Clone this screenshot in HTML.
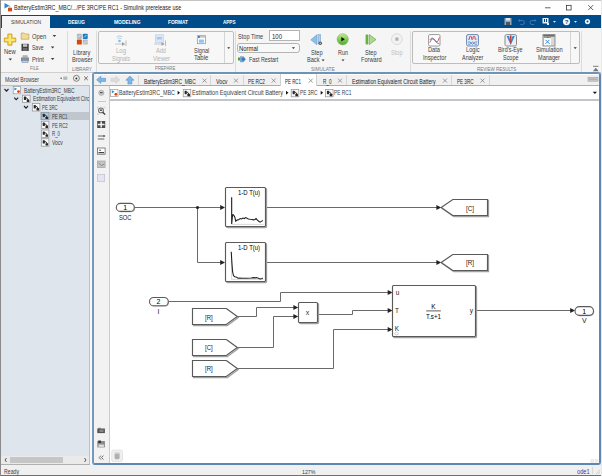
<!DOCTYPE html>
<html><head><meta charset="utf-8">
<style>
html,body{margin:0;padding:0;width:602px;height:476px;overflow:hidden;background:#f0f0f0;}
body{position:relative;font-family:"Liberation Sans",sans-serif;}
.b{position:absolute;box-sizing:border-box;}
.t{position:absolute;white-space:nowrap;line-height:10px;height:10px;transform-origin:0 50%;}
svg{position:absolute;left:0;top:0;}
</style></head><body>
<!-- window borders / title -->
<div class="b" style="left:0;top:0;width:602px;height:15px;background:#fff;"></div>
<div class="b" style="left:0;top:0;width:602px;height:1px;background:#c4c4c4;"></div>
<!-- blue band -->
<div class="b" style="left:0;top:15px;width:602px;height:13px;background:#004b8a;"></div>
<!-- simulation tab -->
<div class="b" style="left:2px;top:16px;width:48px;height:12px;background:#f5f5f5;"></div>
<!-- toolbar -->
<div class="b" style="left:0;top:28px;width:602px;height:44px;background:#f5f5f5;"></div>
<div class="b" style="left:0;top:72px;width:602px;height:1px;background:#cfcfcf;"></div>
<!-- ribbon separators -->
<div class="b" style="left:67px;top:31px;width:1px;height:41px;background:#dcdcdc;"></div>
<div class="b" style="left:96px;top:31px;width:1px;height:41px;background:#dcdcdc;"></div>
<div class="b" style="left:235px;top:31px;width:1px;height:41px;background:#dcdcdc;"></div>
<div class="b" style="left:410px;top:31px;width:1px;height:41px;background:#dcdcdc;"></div>
<div class="b" style="left:581px;top:31px;width:1px;height:41px;background:#dcdcdc;"></div>
<!-- PREPARE gallery box -->
<div class="b" style="left:98px;top:31px;width:136px;height:33px;border:1px solid #bdbdbd;border-radius:2px;background:#f7f7f7;"></div>
<div class="b" style="left:224px;top:32px;width:1px;height:31px;background:#d4d4d4;"></div>
<!-- REVIEW box -->
<div class="b" style="left:412px;top:31px;width:168px;height:33px;border:1px solid #bdbdbd;border-radius:2px;background:#f7f7f7;"></div>
<div class="b" style="left:570px;top:32px;width:1px;height:31px;background:#d4d4d4;"></div>
<!-- stop time input -->
<div class="b" style="left:269px;top:30px;width:31px;height:11px;border:1px solid #b4b4b4;background:#fff;"></div>
<!-- mode dropdown -->
<div class="b" style="left:237px;top:43px;width:63px;height:10px;border:1px solid #b4b4b4;border-radius:3px;background:#f8f8f8;"></div>

<!-- model browser -->
<div class="b" style="left:1px;top:73px;width:91px;height:12px;background:#f0f0f0;"></div>
<div class="b" style="left:1px;top:85px;width:89px;height:1px;background:#b9c1ca;"></div>
<div class="b" style="left:1px;top:86px;width:89px;height:370px;background:#dee5ed;"></div>
<div class="b" style="left:89px;top:85px;width:1px;height:380px;background:#b9c1ca;"></div>
<div class="b" style="left:40px;top:112px;width:49px;height:8px;background:#c0c6ce;"></div>
<div class="b" style="left:1px;top:456px;width:88px;height:8px;background:#eaeaea;"></div>
<div class="b" style="left:10px;top:457px;width:53px;height:6px;background:#c6c6c6;"></div>
<div class="b" style="left:1px;top:464px;width:89px;height:1px;background:#b0b0b0;"></div>

<div class="b" style="left:90px;top:73px;width:2px;height:392px;background:#faf8f6;"></div>
<!-- canvas frame -->
<div class="b" style="left:92px;top:72px;width:509px;height:393px;border:2px solid #5a87b4;border-left-color:#7399c0;border-top-color:#6d93bb;border-radius:3px;background:#fff;"></div>
<!-- tab strip -->
<div class="b" style="left:94px;top:75px;width:505px;height:10px;background:#f0f0f0;"></div>
<div class="b" style="left:94px;top:85px;width:505px;height:1px;background:#abadb1;"></div>
<!-- active tab -->
<div class="b" style="left:280px;top:74px;width:37px;height:12px;background:#fff;border-left:1px solid #d0d0d0;border-right:1px solid #d0d0d0;"></div>
<!-- tab separators -->
<div class="b" style="left:138px;top:75px;width:1px;height:10px;background:#d6d6d6;"></div>
<div class="b" style="left:210px;top:75px;width:1px;height:10px;background:#d6d6d6;"></div>
<div class="b" style="left:243px;top:75px;width:1px;height:10px;background:#d6d6d6;"></div>
<div class="b" style="left:346px;top:75px;width:1px;height:10px;background:#d6d6d6;"></div>
<div class="b" style="left:451px;top:75px;width:1px;height:10px;background:#d6d6d6;"></div>
<div class="b" style="left:489px;top:75px;width:1px;height:10px;background:#d6d6d6;"></div>
<!-- left canvas toolbar -->
<div class="b" style="left:94px;top:86px;width:15px;height:377px;background:#f2f2f2;"></div>
<div class="b" style="left:109px;top:86px;width:1px;height:377px;background:#c9cbd0;"></div>
<div class="b" style="left:98px;top:101px;width:8px;height:1px;background:#c8c8c8;"></div>
<!-- breadcrumb bottom -->
<div class="b" style="left:110px;top:99px;width:489px;height:2px;background:#c2c5ca;"></div>

<!-- status bar -->
<div class="b" style="left:0;top:466px;width:602px;height:10px;background:#f0f0f0;"></div>
<div class="b" style="left:0;top:475px;width:602px;height:1px;background:#6e6e6e;"></div>
<div class="b" style="left:592px;top:467px;width:1px;height:7px;background:#d8d8d8;"></div>
<!-- window left/right borders -->
<div class="b" style="left:0;top:0;width:1px;height:476px;background:#8a8a8a;"></div>
<div class="b" style="left:601px;top:0;width:1px;height:476px;background:#e8e8e8;"></div>

<svg width="602" height="476" viewBox="0 0 602 476">
<polyline points="134.5,207.5 221.5,207.5" fill="none" stroke="#6a6a6a" stroke-width="1.0"/>
<polyline points="197.5,207.5 197.5,262.5 221.5,262.5" fill="none" stroke="#6a6a6a" stroke-width="1.0"/>
<polyline points="265.5,207.5 437.5,207.5" fill="none" stroke="#6a6a6a" stroke-width="1.0"/>
<polyline points="265.5,262.5 437.5,262.5" fill="none" stroke="#6a6a6a" stroke-width="1.0"/>
<circle cx="197.5" cy="207.5" r="1.6" fill="#222"/>
<polygon points="225,207.5 220.2,205.0 220.2,210.0" fill="#222"/>
<polygon points="225,262.5 220.2,260.0 220.2,265.0" fill="#222"/>
<polygon points="441.2,207.5 436.4,205.0 436.4,210.0" fill="#222"/>
<polygon points="441.2,262.5 436.4,260.0 436.4,265.0" fill="#222"/>
<polyline points="168.5,301.5 280.5,301.5 280.5,292.5 388.5,292.5" fill="none" stroke="#6a6a6a" stroke-width="1.0"/>
<polyline points="237.5,316.5 256.5,316.5 256.5,307.5 294.5,307.5" fill="none" stroke="#6a6a6a" stroke-width="1.0"/>
<polyline points="237.5,347.5 273.5,347.5 273.5,316.5 294.5,316.5" fill="none" stroke="#6a6a6a" stroke-width="1.0"/>
<polyline points="237.5,368.5 333.5,368.5 333.5,329.5 388.5,329.5" fill="none" stroke="#6a6a6a" stroke-width="1.0"/>
<polyline points="317.5,314.5 352.5,314.5 352.5,310.5 388.5,310.5" fill="none" stroke="#6a6a6a" stroke-width="1.0"/>
<polyline points="475.5,310.5 571.5,310.5" fill="none" stroke="#6a6a6a" stroke-width="1.0"/>
<polygon points="298.2,307.5 293.4,305.0 293.4,310.0" fill="#222"/>
<polygon points="298.2,316.5 293.4,314.0 293.4,319.0" fill="#222"/>
<polygon points="392.5,292.5 387.7,290.0 387.7,295.0" fill="#222"/>
<polygon points="392.5,310.5 387.7,308.0 387.7,313.0" fill="#222"/>
<polygon points="392.5,329.5 387.7,327.0 387.7,332.0" fill="#222"/>
<polygon points="575,310.5 570.2,308.0 570.2,313.0" fill="#222"/>
<rect x="117.1" y="204.20000000000002" width="18.000000000000014" height="8.0" rx="4.0" fill="#b0b0b0"/>
<rect x="116.3" y="203.4" width="18.000000000000014" height="8.0" rx="4.0" fill="#fff" stroke="#5a5a5a" stroke-width="1.1"/>
<rect x="150.3" y="298.3" width="18.80000000000001" height="8.300000000000011" rx="4.150000000000006" fill="#b0b0b0"/>
<rect x="149.5" y="297.5" width="18.80000000000001" height="8.300000000000011" rx="4.150000000000006" fill="#fff" stroke="#5a5a5a" stroke-width="1.1"/>
<rect x="575.8" y="307.40000000000003" width="18.5" height="8.799999999999955" rx="4.399999999999977" fill="#b0b0b0"/>
<rect x="575" y="306.6" width="18.5" height="8.799999999999955" rx="4.399999999999977" fill="#fff" stroke="#5a5a5a" stroke-width="1.1"/>
<rect x="226.5" y="188.5" width="40.0" height="39.0" rx="1.0" fill="none" stroke="#a0a0a0" stroke-width="1.3"/>
<rect x="225.5" y="187.5" width="40.0" height="39.0" rx="1.0" fill="#fff" stroke="#5a5a5a" stroke-width="1.15"/>
<rect x="226.5" y="243.5" width="40.0" height="39.0" rx="1.0" fill="none" stroke="#a0a0a0" stroke-width="1.3"/>
<rect x="225.5" y="242.5" width="40.0" height="39.0" rx="1.0" fill="#fff" stroke="#5a5a5a" stroke-width="1.15"/>
<rect x="299.5" y="303.5" width="19.0" height="20.0" rx="1.0" fill="none" stroke="#a0a0a0" stroke-width="1.3"/>
<rect x="298.5" y="302.5" width="19.0" height="20.0" rx="1.0" fill="#fff" stroke="#5a5a5a" stroke-width="1.15"/>
<rect x="393.5" y="286.5" width="83.0" height="51.0" rx="1.0" fill="none" stroke="#a0a0a0" stroke-width="1.3"/>
<rect x="392.5" y="285.5" width="83.0" height="51.0" rx="1.0" fill="#fff" stroke="#5a5a5a" stroke-width="1.15"/>
<polygon points="442.2,208.5 453.8,200.5 488.5,200.5 488.5,216.5 453.8,216.5" fill="none" stroke="#a0a0a0" stroke-width="1.3"/>
<polygon points="441.2,207.5 452.8,199.5 487.5,199.5 487.5,215.5 452.8,215.5" fill="#fff" stroke="#5a5a5a" stroke-width="1.15"/>
<polygon points="442.2,263.5 453.8,255.5 488.5,255.5 488.5,271.5 453.8,271.5" fill="none" stroke="#a0a0a0" stroke-width="1.3"/>
<polygon points="441.2,262.5 452.8,254.5 487.5,254.5 487.5,270.5 452.8,270.5" fill="#fff" stroke="#5a5a5a" stroke-width="1.15"/>
<polygon points="193.5,309.5 227.3,309.5 238.3,317.5 227.3,325.5 193.5,325.5" fill="none" stroke="#a0a0a0" stroke-width="1.3"/>
<polygon points="192.5,308.5 226.3,308.5 237.3,316.5 226.3,324.5 192.5,324.5" fill="#fff" stroke="#5a5a5a" stroke-width="1.15"/>
<polygon points="193.5,340.5 227.3,340.5 238.3,348.5 227.3,356.5 193.5,356.5" fill="none" stroke="#a0a0a0" stroke-width="1.3"/>
<polygon points="192.5,339.5 226.3,339.5 237.3,347.5 226.3,355.5 192.5,355.5" fill="#fff" stroke="#5a5a5a" stroke-width="1.15"/>
<polygon points="193.5,361.5 227.3,361.5 238.3,369.5 227.3,377.5 193.5,377.5" fill="none" stroke="#a0a0a0" stroke-width="1.3"/>
<polygon points="192.5,360.5 226.3,360.5 237.3,368.5 226.3,376.5 192.5,376.5" fill="#fff" stroke="#5a5a5a" stroke-width="1.15"/>
<line x1="426.2" y1="310.9" x2="440.8" y2="310.9" stroke="#333" stroke-width="0.8"/>
<path d="M394.5,333.8 L396.5,331.8 L398.5,333.8 L396.5,335.2 Z" fill="none" stroke="#aaa" stroke-width="0.6"/>
<polyline points="231.5,197 231.5,224.4 263.5,224.4" fill="none" stroke="#c8c8c8" stroke-width="0.7"/>
<polyline points="231.68,197.29 231.68,223.94 232.58,214.91 233.49,214.91 234.84,217.17 235.74,221.23 236.65,220.33 238.00,219.88 238.91,219.42 240.26,218.52 241.62,218.97 242.97,218.07 244.33,218.52 245.68,217.62 247.04,218.34 248.39,218.97 250.20,219.24 252.00,219.42 253.81,219.88 255.17,219.24 256.07,218.52 257.42,220.15 258.78,221.23 260.13,222.13 261.49,221.41 262.84,220.33" fill="none" stroke="#222" stroke-width="1.1"/>
<polyline points="231.5,252.3 231.5,279.4 263.5,279.4" fill="none" stroke="#c8c8c8" stroke-width="0.7"/>
<polyline points="231.23,251.84 231.95,263.58 232.58,271.71 233.49,275.78 234.84,276.68 236.65,277.13 238.00,278.22 239.81,278.04 242.07,278.22 246.58,278.22 251.10,278.04 253.81,277.59 255.17,277.86 256.52,277.59 258.33,278.22 260.13,278.94 261.94,278.49 262.84,278.04" fill="none" stroke="#222" stroke-width="1.1"/>
<polygon points="4.5,3 4.5,8.5 9.5,5.7" fill="#2a8ad0"/>
<line x1="9.5" y1="5.7" x2="10" y2="8" stroke="#888" stroke-width="0.6"/>
<rect x="8" y="7.8" width="4" height="3.6" fill="#d84a10"/>
<line x1="545" y1="7.8" x2="550.5" y2="7.8" stroke="#222" stroke-width="0.7"/>
<rect x="566.4" y="5.3" width="4.7" height="4.7" fill="none" stroke="#222" stroke-width="0.7"/>
<path d="M588.2,5.1 L593.2,10.1 M593.2,5.1 L588.2,10.1" stroke="#222" stroke-width="0.7"/>
<rect x="504.5" y="18" width="7" height="7" fill="#9aa6b2"/><rect x="506" y="18" width="4" height="2.5" fill="#dfe6ee"/><rect x="506" y="22" width="4" height="3" fill="#4a5560"/>
<path d="M519,20.5 h3.5 a2,2 0 0 1 0,4 h-2" fill="none" stroke="#4a7ab0" stroke-width="0.9"/><polygon points="518,20.5 520,19 520,22" fill="#4a7ab0"/>
<path d="M535.5,20.5 h-3.5 a2,2 0 0 0 0,4 h2" fill="none" stroke="#4a7ab0" stroke-width="0.9"/><polygon points="536.5,20.5 534.5,19 534.5,22" fill="#4a7ab0"/>
<rect x="542.5" y="18" width="6" height="5.5" fill="#e8eef4"/><rect x="544" y="19" width="1" height="3" fill="#004b8a"/><rect x="546" y="19" width="1" height="3" fill="#004b8a"/><rect x="547" y="23" width="2" height="2" fill="#e8eef4"/>
<polygon points="553,21 556,21 554.5,22.8" fill="#e8eef4"/>
<circle cx="566.5" cy="21.6" r="3.6" fill="#f4f6f8"/><text x="566.5" y="23.9" font-family="Liberation Sans" font-weight="bold" font-size="6" fill="#004b8a" text-anchor="middle">?</text>
<polygon points="574,21 577,21 575.5,22.8" fill="#e8eef4"/>
<circle cx="587.5" cy="21.6" r="2.6" fill="#f4f6f8"/><circle cx="587.5" cy="21.6" r="1" fill="#004b8a"/>
<path d="M7.8,34 h4.2 v4 h3.8 v4 h-3.8 v3.2 h-4.2 v-3.2 h-3.6 v-4 h3.6 z" fill="#f2cc3a" stroke="#c8961c" stroke-width="0.7"/>
<path d="M8.8,35 h2.2 v4 h3.8 v2 h-3.8 v3 h-2.2 v-3 h-3.6 v-2 h3.6 z" fill="#fbe67a"/>
<path d="M21.2,33 h3 l1,1 h3.6 v5.2 h-7.6 z" fill="#f2dc98" stroke="#b89448" stroke-width="0.6"/>
<rect x="21.5" y="43.8" width="7.2" height="7.2" fill="#3e3e3e"/><rect x="23" y="44.2" width="4.2" height="2.6" fill="#c8c8c8"/><rect x="22.8" y="48" width="4.6" height="3" fill="#6a6a6a"/>
<rect x="22.6" y="55.2" width="5" height="2.4" fill="#b0b0b0"/><rect x="21" y="57.4" width="8" height="3.8" fill="#8a8f96"/><rect x="22" y="60.6" width="6" height="2.2" fill="#b8d0e8" stroke="#6a88a8" stroke-width="0.4"/>
<polygon points="8.5,58.6 12.100000000000001,58.6 10.3,60.6" fill="#3a3a3a"/>
<polygon points="52.6,35.1 56.199999999999996,35.1 54.4,37.1" fill="#3a3a3a"/>
<polygon points="50.800000000000004,46.5 54.4,46.5 52.6,48.5" fill="#3a3a3a"/>
<polygon points="50.800000000000004,58.0 54.4,58.0 52.6,60.0" fill="#3a3a3a"/>
<rect x="76.9" y="33.8" width="4.9" height="5.1" rx="0.6" fill="#b4b8bc"/>
<rect x="82.8" y="33.8" width="4.9" height="5.1" rx="0.6" fill="#1c7cc4"/>
<rect x="76.9" y="39.6" width="4.9" height="5.0" rx="0.6" fill="#d8460e"/>
<rect x="82.8" y="39.6" width="4.9" height="5.0" rx="0.6" fill="#b8bcc0"/>
<path d="M78,37.5 l2.5,-2.5 M84,37.5 l2.5,-2.5 M84,43.5 l2.5,-2.5" stroke="#fff" stroke-width="0.7"/>
<path d="M116.5,37.2 a4.2,4.2 0 0 1 6,0 M117.7,38.8 a2.6,2.6 0 0 1 3.6,0" fill="none" stroke="#a8c8e4" stroke-width="0.9"/>
<circle cx="119.5" cy="41" r="1.3" fill="#8ab8e0"/>
<line x1="115" y1="44" x2="124" y2="44" stroke="#c0c0c0" stroke-width="0.9"/><polygon points="122,42 125.2,44 122,46" fill="#a0a0a0"/><line x1="126" y1="40.5" x2="126" y2="46" stroke="#a8a8a8" stroke-width="0.8"/>
<rect x="155.3" y="34.8" width="8" height="7.6" fill="#d8e8f6" stroke="#b8ccdc" stroke-width="0.6"/><rect x="156.8" y="37" width="5" height="2.4" fill="#a8c8e8"/>
<line x1="154" y1="44" x2="164" y2="44" stroke="#c0c0c0" stroke-width="0.9"/><polygon points="161.5,42 164.5,44 161.5,46" fill="#a0a0a0"/><line x1="165.5" y1="40.5" x2="165.5" y2="46" stroke="#a8a8a8" stroke-width="0.8"/>
<rect x="197.3" y="35.7" width="8.2" height="8" fill="#fff" stroke="#8c8c8c" stroke-width="0.7"/><rect x="197.6" y="36" width="7.6" height="1.8" fill="#c8c8c8"/><circle cx="198.9" cy="36.9" r="0.9" fill="#1a5ab0"/><rect x="198.9" y="39.6" width="5" height="3.2" rx="0.6" fill="#8cc4f4"/>
<polygon points="227.2,47.2 230.2,47.2 228.7,48.9" fill="#333"/>
<polygon points="291.8,47.2 295,47.2 293.4,49" fill="#333"/>
<rect x="238" y="57.5" width="2.4" height="3" fill="#50a030"/><path d="M240,56.2 h3.5 l2.5,3 l-2.5,3 h-3.5 z" fill="#7aa8d0"/><circle cx="243.2" cy="59.2" r="1.6" fill="#3a78b8"/>
<polygon points="316.8,34.8 310.8,39.8 316.8,44.8" fill="#8cc0e8" stroke="#5a90c0" stroke-width="0.5"/><rect x="318" y="34.6" width="2.6" height="8.6" fill="#a8d0f0" stroke="#6a98c0" stroke-width="0.5"/><circle cx="320.2" cy="43.2" r="1.8" fill="#555"/><circle cx="320.2" cy="43.2" r="0.7" fill="#ddd"/>
<polygon points="321.6,59.5 324.6,59.5 323.1,61.2" fill="#333"/>
<defs><linearGradient id="rg" x1="0" y1="0" x2="0" y2="1"><stop offset="0" stop-color="#c4ec98"/><stop offset="0.55" stop-color="#7cc850"/><stop offset="1" stop-color="#58a838"/></linearGradient></defs><circle cx="342.7" cy="39.3" r="5.6" fill="url(#rg)" stroke="#78b858" stroke-width="0.6"/><polygon points="341.3,37.1 341.3,41.5 344.8,39.3" fill="#111"/>
<polygon points="341.5,59.5 344.5,59.5 343,61.2" fill="#333"/>
<rect x="365.6" y="34.6" width="2.6" height="10" rx="0.8" fill="#6ab040"/><polygon points="369.2,34.6 376,39.6 369.2,44.6" fill="#a8dc88" stroke="#5a9a3a" stroke-width="0.6"/>
<circle cx="396.9" cy="39.1" r="5.4" fill="#f2f2f2" stroke="#d4d4d4" stroke-width="0.8"/><rect x="395.3" y="37.5" width="3.2" height="3.2" fill="#b0b0b0"/>
<rect x="428.6" y="34.6" width="11.4" height="11.4" rx="1.2" fill="#fff" stroke="#9a9a9a" stroke-width="1"/>
<path d="M429.8,42.5 q2.5,-6 5,-2 t4.5,-3" fill="none" stroke="#d04040" stroke-width="0.9"/><path d="M429.8,40 q2.5,-4 5,0 t4.5,4" fill="none" stroke="#3a7ad0" stroke-width="0.9"/>
<rect x="466.6" y="34.6" width="11.8" height="11.4" rx="1.4" fill="#e0ecf8" stroke="#6e88b8" stroke-width="1"/>
<path d="M468,39.2 h1.5 v-2.5 h2 v2.5 h1.5 v-2.5 h2 v2.5 h1.6" fill="none" stroke="#d03a3a" stroke-width="0.8"/><path d="M468,42 h2 l2.5,2.2 l2.5,-2.2 h2 M468,44.2 h2 l2.5,-2.2 l2.5,2.2 h2" fill="none" stroke="#3a6ac0" stroke-width="0.7"/>
<rect x="505" y="34.6" width="11.5" height="11.4" rx="1.6" fill="#f0f0f0" stroke="#8a8a8a" stroke-width="1"/>
<polygon points="506.6,36 510.7,45 514.9,36 512.5,36 510.7,41 509,36" fill="#3a8ad8"/><polygon points="509.8,35.6 511.6,35.6 511,44 510.4,44" fill="#d03030"/>
<rect x="543" y="34.6" width="12" height="11.4" fill="#d8d8d8" stroke="#7a7a7a" stroke-width="0.8"/><rect x="543.4" y="35" width="11.2" height="1.6" fill="#6a6a6a"/><rect x="544" y="36.8" width="3" height="1.2" fill="#60c060"/><rect x="547" y="36.8" width="2" height="1.2" fill="#e05050"/><rect x="549" y="36.8" width="2" height="1.2" fill="#60c060"/><rect x="544" y="38.2" width="7" height="7" fill="#fff"/>
<path d="M545.5,39.8 l4,4 M549.5,39.8 l-4,4" stroke="#2a8ae0" stroke-width="1"/>
<polygon points="573.6,47.3 576.8,47.3 575.2,49" fill="#333"/>
<line x1="593" y1="66.3" x2="598.5" y2="66.3" stroke="#666" stroke-width="0.8"/><polygon points="592.8,71.2 598.8,71.2 595.8,67.8" fill="#777"/>
<rect x="60.6" y="77.6" width="1.2" height="1.2" fill="#333"/><rect x="63.3" y="76.5" width="4" height="3.4" fill="#b8b8b8"/>
<circle cx="76.4" cy="78.3" r="3" fill="none" stroke="#555" stroke-width="0.7"/><circle cx="76.4" cy="78.6" r="1" fill="#333"/>
<path d="M84.2,76.5 L87.8,80.1 M87.8,76.5 L84.2,80.1" stroke="#444" stroke-width="0.8"/>
<polyline points="4.5,89.0 6.5,91.10000000000001 8.5,89.0" fill="none" stroke="#222" stroke-width="1.1"/>
<polyline points="14.2,97.6 16.2,99.7 18.2,97.6" fill="none" stroke="#222" stroke-width="1.1"/>
<polyline points="24,106.0 26,108.10000000000001 28,106.0" fill="none" stroke="#222" stroke-width="1.1"/>
<rect x="13.2" y="86.6" width="7.4" height="7.2" fill="#fff" stroke="#8a8a8a" stroke-width="0.6"/><polygon points="14.399999999999999,87.6 14.399999999999999,90.6 17.2,89.1" fill="#2a8ad0"/><circle cx="18.5" cy="91.6" r="1.4" fill="#d84010"/>
<rect x="22.5" y="95.2" width="7.6" height="7.4" fill="#f8f8f8" stroke="#909090" stroke-width="0.7"/><rect x="23.9" y="96.60000000000001" width="2.2" height="3.4" rx="0.6" fill="#2a2a2a"/><path d="M25.7,97.8 q2,0 2.6,2.4" fill="none" stroke="#2a2a2a" stroke-width="0.9"/><rect x="26.7" y="99.60000000000001" width="2.6" height="2.4" rx="0.5" fill="#2a2a2a"/>
<rect x="32.3" y="103.6" width="7.6" height="7.4" fill="#f8f8f8" stroke="#909090" stroke-width="0.7"/><rect x="33.699999999999996" y="105.0" width="2.2" height="3.4" rx="0.6" fill="#2a2a2a"/><path d="M35.5,106.19999999999999 q2,0 2.6,2.4" fill="none" stroke="#2a2a2a" stroke-width="0.9"/><rect x="36.5" y="108.0" width="2.6" height="2.4" rx="0.5" fill="#2a2a2a"/>
<rect x="41.3" y="112.3" width="7.6" height="7.4" fill="#a8c8e8" stroke="#909090" stroke-width="0.7"/><rect x="42.699999999999996" y="113.7" width="2.2" height="3.4" rx="0.6" fill="#2a2a2a"/><path d="M44.5,114.89999999999999 q2,0 2.6,2.4" fill="none" stroke="#2a2a2a" stroke-width="0.9"/><rect x="45.5" y="116.7" width="2.6" height="2.4" rx="0.5" fill="#2a2a2a"/>
<rect x="41.3" y="121.2" width="7.6" height="7.4" fill="#f8f8f8" stroke="#909090" stroke-width="0.7"/><rect x="42.699999999999996" y="122.60000000000001" width="2.2" height="3.4" rx="0.6" fill="#2a2a2a"/><path d="M44.5,123.8 q2,0 2.6,2.4" fill="none" stroke="#2a2a2a" stroke-width="0.9"/><rect x="45.5" y="125.60000000000001" width="2.6" height="2.4" rx="0.5" fill="#2a2a2a"/>
<rect x="41.3" y="130" width="7.6" height="7.4" fill="#f8f8f8" stroke="#909090" stroke-width="0.7"/><rect x="42.699999999999996" y="131.4" width="2.2" height="3.4" rx="0.6" fill="#2a2a2a"/><path d="M44.5,132.6 q2,0 2.6,2.4" fill="none" stroke="#2a2a2a" stroke-width="0.9"/><rect x="45.5" y="134.4" width="2.6" height="2.4" rx="0.5" fill="#2a2a2a"/>
<rect x="41.3" y="138.8" width="7.6" height="7.4" fill="#f8f8f8" stroke="#909090" stroke-width="0.7"/><rect x="42.699999999999996" y="140.20000000000002" width="2.2" height="3.4" rx="0.6" fill="#2a2a2a"/><path d="M44.5,141.4 q2,0 2.6,2.4" fill="none" stroke="#2a2a2a" stroke-width="0.9"/><rect x="45.5" y="143.20000000000002" width="2.6" height="2.4" rx="0.5" fill="#2a2a2a"/>
<polyline points="6.5,458 5,460 6.5,462" fill="none" stroke="#333" stroke-width="0.8"/><polyline points="84.5,458 86,460 84.5,462" fill="none" stroke="#333" stroke-width="0.8"/>
<polygon points="96.6,79.8 100.8,76.2 100.8,78.3 105.6,78.3 105.6,81.4 100.8,81.4 100.8,83.4" fill="#7ab8e8" stroke="#4a88c0" stroke-width="0.5"/>
<polygon points="120,79.8 115.8,76.2 115.8,78.3 111,78.3 111,81.4 115.8,81.4 115.8,83.4" fill="#dcdcdc" stroke="#c8c8c8" stroke-width="0.5"/>
<polygon points="129.9,76 125.8,80.2 127.9,80.2 127.9,84 131.9,84 131.9,80.2 134,80.2" fill="#7ab8e8" stroke="#4a88c0" stroke-width="0.5"/>
<path d="M202.5,78.6 L206.5,82.6 M206.5,78.6 L202.5,82.6" stroke="#777" stroke-width="0.7"/>
<path d="M234,78.6 L238,82.6 M238,78.6 L234,82.6" stroke="#777" stroke-width="0.7"/>
<path d="M271.7,78.6 L275.7,82.6 M275.7,78.6 L271.7,82.6" stroke="#777" stroke-width="0.7"/>
<path d="M308.8,78.6 L312.8,82.6 M312.8,78.6 L308.8,82.6" stroke="#777" stroke-width="0.7"/>
<path d="M338,78.6 L342,82.6 M342,78.6 L338,82.6" stroke="#777" stroke-width="0.7"/>
<path d="M443,78.6 L447,82.6 M447,78.6 L443,82.6" stroke="#777" stroke-width="0.7"/>
<path d="M480.5,78.6 L484.5,82.6 M484.5,78.6 L480.5,82.6" stroke="#777" stroke-width="0.7"/>
<rect x="588" y="77.2" width="10" height="4" fill="#c8c8c8" stroke="#999" stroke-width="0.5"/><line x1="589" y1="79.2" x2="597" y2="79.2" stroke="#888" stroke-width="0.5"/>
<circle cx="101.3" cy="92.8" r="2.6" fill="#d0d0d0" stroke="#888" stroke-width="0.5"/><rect x="100" y="92.2" width="2.6" height="1" fill="#333"/>
<rect x="110.6" y="89.3" width="7.4" height="7.2" fill="#fff" stroke="#8a8a8a" stroke-width="0.6"/><polygon points="111.8,90.3 111.8,93.3 114.6,91.8" fill="#2a8ad0"/><circle cx="115.89999999999999" cy="94.3" r="1.4" fill="#d84010"/>
<polygon points="177.6,90.8 180.0,92.8 177.6,94.8" fill="#111"/>
<polygon points="286,90.8 288.4,92.8 286,94.8" fill="#111"/>
<polygon points="320.7,90.8 323.09999999999997,92.8 320.7,94.8" fill="#111"/>
<rect x="183.2" y="89.4" width="7.6" height="7.4" fill="#f8f8f8" stroke="#909090" stroke-width="0.7"/><rect x="184.6" y="90.80000000000001" width="2.2" height="3.4" rx="0.6" fill="#2a2a2a"/><path d="M186.39999999999998,92.0 q2,0 2.6,2.4" fill="none" stroke="#2a2a2a" stroke-width="0.9"/><rect x="187.39999999999998" y="93.80000000000001" width="2.6" height="2.4" rx="0.5" fill="#2a2a2a"/>
<rect x="291.2" y="89.4" width="7.6" height="7.4" fill="#f8f8f8" stroke="#909090" stroke-width="0.7"/><rect x="292.59999999999997" y="90.80000000000001" width="2.2" height="3.4" rx="0.6" fill="#2a2a2a"/><path d="M294.4,92.0 q2,0 2.6,2.4" fill="none" stroke="#2a2a2a" stroke-width="0.9"/><rect x="295.4" y="93.80000000000001" width="2.6" height="2.4" rx="0.5" fill="#2a2a2a"/>
<rect x="325.5" y="89.4" width="7.6" height="7.4" fill="#f8f8f8" stroke="#909090" stroke-width="0.7"/><rect x="326.9" y="90.80000000000001" width="2.2" height="3.4" rx="0.6" fill="#2a2a2a"/><path d="M328.7,92.0 q2,0 2.6,2.4" fill="none" stroke="#2a2a2a" stroke-width="0.9"/><rect x="329.7" y="93.80000000000001" width="2.6" height="2.4" rx="0.5" fill="#2a2a2a"/>
<polygon points="592.8,91.8 597,91.8 594.9,94" fill="#111"/>
<path d="M97.5,108.5 v-1.5 h1.5 M103.5,107 h1.5 v1.5 M97.5,113 v1.5 h1.5" fill="none" stroke="#bbb" stroke-width="0.5"/>
<circle cx="101" cy="110.4" r="2.4" fill="#f4f4f4" stroke="#6a6a6a" stroke-width="1.1"/><line x1="102.7" y1="112.2" x2="105.2" y2="114.6" stroke="#333" stroke-width="1.3"/><circle cx="101" cy="110.2" r="0.9" fill="#333"/>
<rect x="97.2" y="121" width="8" height="7" fill="#4a4a4a"/><path d="M101.2,121.6 v5.8 M97.8,124.5 h6.8" stroke="#f0f0f0" stroke-width="1.5"/>
<path d="M97.8,136 h6.5 M97.8,139 h6.5" stroke="#444" stroke-width="0.8"/><polygon points="103.5,134.8 105.5,136 103.5,137.2" fill="#444"/>
<rect x="97.5" y="148" width="7.6" height="6.2" fill="#fff" stroke="#555" stroke-width="0.7"/><rect x="98.5" y="152" width="5.6" height="1.2" fill="#444"/><circle cx="100" cy="150.2" r="0.8" fill="#444"/>
<rect x="97.5" y="161" width="7.6" height="6.6" fill="#c4c4c4" stroke="#999" stroke-width="0.6"/><path d="M98.5,163 l3,2.5 l3,-1.5" fill="none" stroke="#666" stroke-width="0.6"/>
<rect x="97.5" y="174.6" width="7.2" height="6.8" fill="#e4e4f4" stroke="#b8b8c8" stroke-width="0.6"/>
<rect x="97.3" y="428.5" width="7.6" height="4.6" fill="#555"/><rect x="98.3" y="427.8" width="2.6" height="1.2" fill="#777"/><rect x="99.5" y="429.5" width="4" height="2.5" fill="#888"/>
<rect x="97.3" y="441" width="7.6" height="6.4" fill="#888"/><rect x="98.3" y="440.5" width="2.6" height="2.5" fill="#333"/><rect x="98.5" y="444.5" width="5.4" height="2.4" fill="#ddd"/>
<path d="M101,455.6 l-1.8,2 l1.8,2 M103.4,455.6 l-1.8,2 l1.8,2" fill="none" stroke="#333" stroke-width="0.7"/>
<rect x="111.6" y="450" width="11" height="11.6" rx="2" fill="#efefef" stroke="#d8d8d8" stroke-width="0.6"/><rect x="114.6" y="452.6" width="5" height="6.6" rx="1.5" fill="#b0b0b0"/><ellipse cx="117.1" cy="452.9" rx="2.5" ry="0.9" fill="#d8d8d8"/>
<rect x="590.5" y="459" width="3.6" height="3.8" fill="#ececec"/><rect x="594.8" y="459" width="3.6" height="3.8" fill="#ececec"/>
<path d="M596,474 l4,-4 M598,474 l2,-2" stroke="#bbb" stroke-width="0.6"/>
</svg>
<div class="t" style="left:14.00px;top:3.10px;font-size:6.4px;color:#1a1a1a;transform:scaleX(0.847);">BatteryEstim3RC_MBC/.../PE 3RC/PE RC1 - Simulink prerelease use</div>
<div class="t" style="left:10.80px;top:17.30px;font-size:5.6px;color:#3a3a3a;transform:scaleX(0.893);">SIMULATION</div>
<div class="t" style="left:67.90px;top:17.10px;font-size:5.6px;color:#ffffff;font-weight:bold;transform:scaleX(0.841);">DEBUG</div>
<div class="t" style="left:114.00px;top:17.10px;font-size:5.6px;color:#ffffff;font-weight:bold;transform:scaleX(0.878);">MODELING</div>
<div class="t" style="left:168.00px;top:17.10px;font-size:5.6px;color:#ffffff;font-weight:bold;transform:scaleX(0.850);">FORMAT</div>
<div class="t" style="left:222.50px;top:17.10px;font-size:5.6px;color:#ffffff;font-weight:bold;transform:scaleX(0.820);">APPS</div>
<div class="t" style="left:4.20px;top:47.30px;font-size:6.4px;color:#3c3c3c;transform:scaleX(0.906);">New</div>
<div class="t" style="left:31.50px;top:32.10px;font-size:6.4px;color:#3c3c3c;transform:scaleX(0.913);">Open</div>
<div class="t" style="left:31.50px;top:43.10px;font-size:6.4px;color:#3c3c3c;transform:scaleX(0.788);">Save</div>
<div class="t" style="left:31.50px;top:54.90px;font-size:6.4px;color:#3c3c3c;transform:scaleX(0.904);">Print</div>
<div class="t" style="left:29.50px;top:63.40px;font-size:5.5px;color:#7a7a7a;transform:scaleX(0.766);">FILE</div>
<div class="t" style="left:73.40px;top:47.90px;font-size:6.4px;color:#3c3c3c;transform:scaleX(0.884);">Library</div>
<div class="t" style="left:71.80px;top:55.30px;font-size:6.4px;color:#3c3c3c;transform:scaleX(0.878);">Browser</div>
<div class="t" style="left:72.00px;top:63.50px;font-size:5.5px;color:#7a7a7a;transform:scaleX(0.853);">LIBRARY</div>
<div class="t" style="left:116.00px;top:46.20px;font-size:6.4px;color:#b4b4b4;transform:scaleX(0.937);">Log</div>
<div class="t" style="left:112.00px;top:53.60px;font-size:6.4px;color:#b4b4b4;transform:scaleX(0.858);">Signals</div>
<div class="t" style="left:156.00px;top:46.20px;font-size:6.4px;color:#b4b4b4;transform:scaleX(0.878);">Add</div>
<div class="t" style="left:152.60px;top:53.60px;font-size:6.4px;color:#b4b4b4;transform:scaleX(0.874);">Viewer</div>
<div class="t" style="left:193.80px;top:46.00px;font-size:6.4px;color:#3c3c3c;transform:scaleX(0.854);">Signal</div>
<div class="t" style="left:194.20px;top:53.00px;font-size:6.4px;color:#3c3c3c;transform:scaleX(0.941);">Table</div>
<div class="t" style="left:155.30px;top:63.40px;font-size:5.5px;color:#7a7a7a;transform:scaleX(0.784);">PREPARE</div>
<div class="t" style="left:238.40px;top:32.00px;font-size:6.4px;color:#3c3c3c;transform:scaleX(0.875);">Stop Time</div>
<div class="t" style="left:272.00px;top:31.70px;font-size:6.4px;color:#222;transform:scaleX(0.937);">100</div>
<div class="t" style="left:239.00px;top:43.60px;font-size:6.4px;color:#222;transform:scaleX(0.921);">Normal</div>
<div class="t" style="left:248.60px;top:54.90px;font-size:6.4px;color:#3c3c3c;transform:scaleX(0.841);">Fast Restart</div>
<div class="t" style="left:310.75px;top:48.10px;font-size:6.4px;color:#3c3c3c;transform:scaleX(0.874);">Step</div>
<div class="t" style="left:306.55px;top:55.40px;font-size:6.4px;color:#3c3c3c;transform:scaleX(0.879);">Back</div>
<div class="t" style="left:338.00px;top:48.10px;font-size:6.4px;color:#3c3c3c;transform:scaleX(0.852);">Run</div>
<div class="t" style="left:365.25px;top:48.10px;font-size:6.4px;color:#3c3c3c;transform:scaleX(0.874);">Step</div>
<div class="t" style="left:360.70px;top:55.40px;font-size:6.4px;color:#3c3c3c;transform:scaleX(0.882);">Forward</div>
<div class="t" style="left:391.25px;top:48.10px;font-size:6.4px;color:#bdbdbd;transform:scaleX(0.874);">Stop</div>
<div class="t" style="left:311.00px;top:63.60px;font-size:5.5px;color:#7a7a7a;transform:scaleX(0.875);">SIMULATE</div>
<div class="t" style="left:428.00px;top:45.30px;font-size:6.4px;color:#3c3c3c;transform:scaleX(0.888);">Data</div>
<div class="t" style="left:422.50px;top:52.90px;font-size:6.4px;color:#3c3c3c;transform:scaleX(0.885);">Inspector</div>
<div class="t" style="left:465.75px;top:45.30px;font-size:6.4px;color:#3c3c3c;transform:scaleX(0.882);">Logic</div>
<div class="t" style="left:462.00px;top:52.90px;font-size:6.4px;color:#3c3c3c;transform:scaleX(0.855);">Analyzer</div>
<div class="t" style="left:498.40px;top:45.30px;font-size:6.4px;color:#3c3c3c;transform:scaleX(0.849);">Bird's-Eye</div>
<div class="t" style="left:502.75px;top:52.90px;font-size:6.4px;color:#3c3c3c;transform:scaleX(0.854);">Scope</div>
<div class="t" style="left:535.60px;top:45.30px;font-size:6.4px;color:#3c3c3c;transform:scaleX(0.890);">Simulation</div>
<div class="t" style="left:538.00px;top:52.90px;font-size:6.4px;color:#3c3c3c;transform:scaleX(0.871);">Manager</div>
<div class="t" style="left:476.50px;top:63.70px;font-size:5.5px;color:#7a7a7a;transform:scaleX(0.816);">REVIEW RESULTS</div>
<div class="t" style="left:5.00px;top:74.70px;font-size:6.4px;color:#3c3c3c;transform:scaleX(0.797);">Model Browser</div>
<div class="t" style="left:23.50px;top:85.80px;font-size:6.4px;color:#3c3c3c;transform:scaleX(0.757);">BatteryEstim3RC_MBC</div>
<div class="b" style="left:0;top:0;width:89px;height:476px;overflow:hidden"><div class="t" style="left:32.90px;top:94.30px;font-size:6.4px;color:#3c3c3c;transform:scaleX(0.757);">Estimation Equivalent Circuit Battery</div></div>
<div class="t" style="left:42.40px;top:102.90px;font-size:6.4px;color:#3c3c3c;transform:scaleX(0.683);">PE 3RC</div>
<div class="t" style="left:52.20px;top:111.60px;font-size:6.4px;color:#3c3c3c;transform:scaleX(0.670);">PE RC1</div>
<div class="t" style="left:52.20px;top:120.50px;font-size:6.4px;color:#3c3c3c;transform:scaleX(0.683);">PE RC2</div>
<div class="t" style="left:52.20px;top:129.20px;font-size:6.4px;color:#3c3c3c;transform:scaleX(0.681);">R_0</div>
<div class="t" style="left:52.20px;top:138.00px;font-size:6.4px;color:#3c3c3c;transform:scaleX(0.778);">Vocv</div>
<div class="t" style="left:143.70px;top:76.50px;font-size:6.4px;color:#222;transform:scaleX(0.775);">BatteryEstim3RC_MBC</div>
<div class="t" style="left:216.00px;top:76.50px;font-size:6.4px;color:#222;transform:scaleX(0.829);">Vocv</div>
<div class="t" style="left:248.00px;top:76.50px;font-size:6.4px;color:#222;transform:scaleX(0.735);">PE RC2</div>
<div class="t" style="left:285.00px;top:76.50px;font-size:6.4px;color:#222;transform:scaleX(0.692);">PE RC1</div>
<div class="t" style="left:322.50px;top:76.50px;font-size:6.4px;color:#222;transform:scaleX(0.724);">R_0</div>
<div class="t" style="left:352.00px;top:76.50px;font-size:6.4px;color:#222;transform:scaleX(0.809);">Estimation Equivalent Circuit Battery</div>
<div class="t" style="left:457.00px;top:76.50px;font-size:6.4px;color:#222;transform:scaleX(0.714);">PE 3RC</div>
<div class="t" style="left:119.00px;top:88.40px;font-size:6.4px;color:#3c3c3c;transform:scaleX(0.838);">BatteryEstim3RC_MBC</div>
<div class="t" style="left:191.80px;top:88.40px;font-size:6.4px;color:#3c3c3c;transform:scaleX(0.880);">Estimation Equivalent Circuit Battery</div>
<div class="t" style="left:299.70px;top:88.40px;font-size:6.4px;color:#3c3c3c;transform:scaleX(0.753);">PE 3RC</div>
<div class="t" style="left:334.10px;top:88.40px;font-size:6.4px;color:#3c3c3c;transform:scaleX(0.753);">PE RC1</div>
<div class="t" style="left:3.50px;top:466.50px;font-size:6.4px;color:#3c3c3c;transform:scaleX(0.811);">Ready</div>
<div class="t" style="left:302.00px;top:466.70px;font-size:5.6px;color:#3c3c3c;transform:scaleX(0.943);">127%</div>
<div class="t" style="left:576.60px;top:466.70px;font-size:6.4px;color:#3b3ba0;transform:scaleX(0.892);">ode1</div>
<div class="t" style="left:123.25px;top:203.10px;font-size:7.0px;color:#000;">1</div>
<div class="t" style="left:118.95px;top:212.70px;font-size:7.0px;color:#202020;transform:scaleX(0.824);">SOC</div>
<div class="t" style="left:237.60px;top:188.30px;font-size:7.0px;color:#000;transform:scaleX(0.852);">1-D T(u)</div>
<div class="t" style="left:237.60px;top:243.30px;font-size:7.0px;color:#000;transform:scaleX(0.852);">1-D T(u)</div>
<div class="t" style="left:466.00px;top:203.70px;font-size:7.0px;color:#202020;transform:scaleX(0.894);">[C]</div>
<div class="t" style="left:466.00px;top:258.30px;font-size:7.0px;color:#202020;transform:scaleX(0.894);">[R]</div>
<div class="t" style="left:156.55px;top:297.30px;font-size:7.0px;color:#000;">2</div>
<div class="t" style="left:157.53px;top:306.70px;font-size:7.0px;color:#202020;">I</div>
<div class="t" style="left:205.30px;top:312.50px;font-size:7.0px;color:#202020;transform:scaleX(0.850);">[R]</div>
<div class="t" style="left:205.30px;top:343.10px;font-size:7.0px;color:#202020;transform:scaleX(0.850);">[C]</div>
<div class="t" style="left:205.30px;top:364.10px;font-size:7.0px;color:#202020;transform:scaleX(0.850);">[R]</div>
<div class="t" style="left:305.75px;top:308.10px;font-size:7px;color:#333;">x</div>
<div class="t" style="left:395.72px;top:288.10px;font-size:6.4px;color:#202020;">u</div>
<div class="t" style="left:395.05px;top:306.30px;font-size:6.4px;color:#202020;">T</div>
<div class="t" style="left:394.87px;top:324.30px;font-size:6.4px;color:#202020;">K</div>
<div class="t" style="left:431.33px;top:302.10px;font-size:6.5px;color:#000;">K</div>
<div class="t" style="left:426.00px;top:311.50px;font-size:6.5px;color:#000;transform:scaleX(0.954);">T.s+1</div>
<div class="t" style="left:469.68px;top:306.30px;font-size:6.5px;color:#202020;">y</div>
<div class="t" style="left:582.35px;top:306.60px;font-size:7.0px;color:#000;">1</div>
<div class="t" style="left:581.97px;top:315.70px;font-size:7.0px;color:#202020;">V</div>
</body></html>
